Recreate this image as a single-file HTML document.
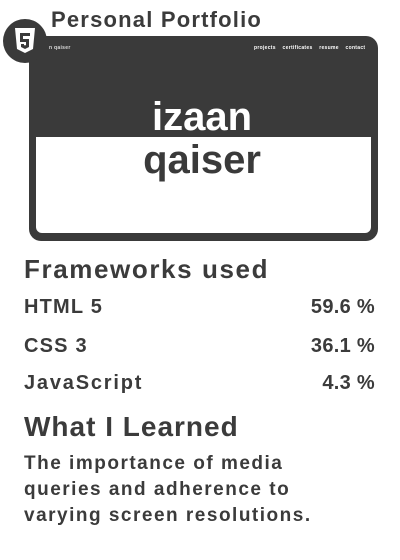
<!DOCTYPE html>
<html><head><style>
*{margin:0;padding:0;box-sizing:border-box}
body{width:400px;height:560px;background:#fff;position:relative;overflow:hidden;font-family:"Liberation Sans",sans-serif;font-weight:bold;color:#3b3b3b}
.a{position:absolute;white-space:nowrap;line-height:1}
</style></head><body>
<div class="a" style="left:51px;top:9px;font-size:22px;letter-spacing:1.2px">Personal Portfolio</div>
<div class="a" style="left:29px;top:36px;width:349px;height:205px;background:#3a3a3a;border-radius:12px"></div>
<div class="a" style="left:36px;top:137px;width:335px;height:96px;background:#fff;border-radius:0 0 6px 6px"></div>
<div class="a" style="left:49px;top:46px;font-size:5px;color:#ddd;letter-spacing:0.3px">n qaiser</div>
<div class="a" style="left:254px;top:46px;font-size:5px;color:#fff;word-spacing:5px;letter-spacing:0.3px">projects certificates resume contact</div>
<div class="a" style="left:0;width:404px;text-align:center;top:97px;font-size:40px;color:#fff;letter-spacing:0px">izaan</div>
<div class="a" style="left:0;width:404px;text-align:center;top:140px;font-size:40px;color:#3a3a3a;letter-spacing:0px">qaiser</div>
<div class="a" style="left:3px;top:19px;width:44px;height:44px;border-radius:50%;background:#3a3a3a"></div>
<svg class="a" style="left:13px;top:27px" width="24" height="28" viewBox="0 0 24 28"><path d="M2 1h20l-2 21-8 4-8-4z" fill="#fff"/><path d="M7 6h10v3h-7v3h6v8l-4 2-4-2v-3h3v1l1 .5 1-.5v-3h-6z" fill="#3a3a3a"/></svg>
<div class="a" style="left:24px;top:256px;font-size:26px;letter-spacing:1.6px">Frameworks used</div>
<div class="a" style="left:24px;top:297px;font-size:20px;letter-spacing:1.2px">HTML 5</div>
<div class="a" style="right:25px;top:297px;font-size:20px;letter-spacing:0.3px">59.6 %</div>
<div class="a" style="left:24px;top:336px;font-size:20px;letter-spacing:1.2px">CSS 3</div>
<div class="a" style="right:25px;top:336px;font-size:20px;letter-spacing:0.3px">36.1 %</div>
<div class="a" style="left:24px;top:373px;font-size:20px;letter-spacing:1.8px">JavaScript</div>
<div class="a" style="right:25px;top:373px;font-size:20px;letter-spacing:0.3px">4.3 %</div>
<div class="a" style="left:24px;top:413px;font-size:28px;letter-spacing:1px">What I Learned</div>
<div class="a" style="left:24px;top:451px;font-size:19px;letter-spacing:1.5px;line-height:26px;white-space:normal;width:360px">The importance of media<br>queries and adherence to<br>varying screen resolutions.</div>
</body></html>
